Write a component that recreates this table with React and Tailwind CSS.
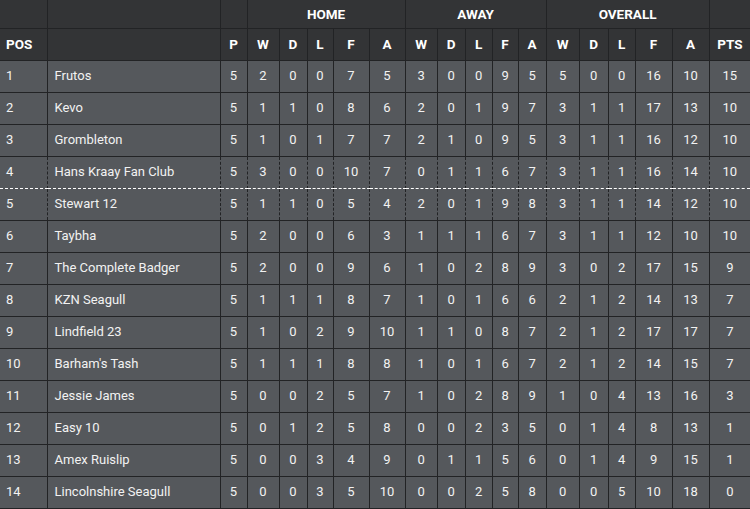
import React from "react";

const widths = [47, 173, 27, 32, 28, 26, 36, 36, 32, 28, 27, 26, 28, 33, 29, 27, 37, 37, 41];

const teams = [
  [1, "Frutos", 5, 2, 0, 0, 7, 5, 3, 0, 0, 9, 5, 5, 0, 0, 16, 10, 15],
  [2, "Kevo", 5, 1, 1, 0, 8, 6, 2, 0, 1, 9, 7, 3, 1, 1, 17, 13, 10],
  [3, "Grombleton", 5, 1, 0, 1, 7, 7, 2, 1, 0, 9, 5, 3, 1, 1, 16, 12, 10],
  [4, "Hans Kraay Fan Club", 5, 3, 0, 0, 10, 7, 0, 1, 1, 6, 7, 3, 1, 1, 16, 14, 10],
  [5, "Stewart 12", 5, 1, 1, 0, 5, 4, 2, 0, 1, 9, 8, 3, 1, 1, 14, 12, 10],
  [6, "Taybha", 5, 2, 0, 0, 6, 3, 1, 1, 1, 6, 7, 3, 1, 1, 12, 10, 10],
  [7, "The Complete Badger", 5, 2, 0, 0, 9, 6, 1, 0, 2, 8, 9, 3, 0, 2, 17, 15, 9],
  [8, "KZN Seagull", 5, 1, 1, 1, 8, 7, 1, 0, 1, 6, 6, 2, 1, 2, 14, 13, 7],
  [9, "Lindfield 23", 5, 1, 0, 2, 9, 10, 1, 1, 0, 8, 7, 2, 1, 2, 17, 17, 7],
  [10, "Barham's Tash", 5, 1, 1, 1, 8, 8, 1, 0, 1, 6, 7, 2, 1, 2, 14, 15, 7],
  [11, "Jessie James", 5, 0, 0, 2, 5, 7, 1, 0, 2, 8, 9, 1, 0, 4, 13, 16, 3],
  [12, "Easy 10", 5, 0, 1, 2, 5, 8, 0, 0, 2, 3, 5, 0, 1, 4, 8, 13, 1],
  [13, "Amex Ruislip", 5, 0, 0, 3, 4, 9, 0, 1, 1, 5, 6, 0, 1, 4, 9, 15, 1],
  [14, "Lincolnshire Seagull", 5, 0, 0, 3, 5, 10, 0, 0, 2, 5, 8, 0, 0, 5, 10, 18, 0],
];

const subHeads = ["P", "W", "D", "L", "F", "A", "W", "D", "L", "F", "A", "W", "D", "L", "F", "A", "PTS"];

const cell = "border border-[#222325] p-0";

export default function App() {
  return (
    <div className="w-[750px] h-[509px] overflow-hidden bg-[#55585c] font-['Roboto',sans-serif] text-[13px] text-[#f2f2f2]">
      <table className="table-fixed border-collapse w-[750px]">
        <colgroup>
          {widths.map((w, i) => (
            <col key={i} style={{ width: w }} />
          ))}
        </colgroup>
        <thead className="bg-[#333436] text-white font-bold text-[13.5px]">
          <tr className="h-[28px]">
            <th className={`${cell} border-l-0 border-t-0`}></th>
            <th className={`${cell} border-t-0`}></th>
            <th className={`${cell} border-t-0`}></th>
            <th colSpan={5} className={`${cell} border-t-0 text-center`}>HOME</th>
            <th colSpan={5} className={`${cell} border-t-0 text-center`}>AWAY</th>
            <th colSpan={5} className={`${cell} border-t-0 text-center`}>OVERALL</th>
            <th className={`${cell} border-t-0 border-r-0`}></th>
          </tr>
          <tr className="h-[32px]">
            <th className={`${cell} border-l-0 text-left pl-[6px]`}>POS</th>
            <th className={cell}></th>
            {subHeads.map((h, i) => (
              <th key={i} className={`${cell} text-center ${i === subHeads.length - 1 ? "border-r-0" : ""}`}>
                {h}
              </th>
            ))}
          </tr>
        </thead>
        <tbody>
          {teams.map((row) => (
            <tr key={row[0]} className="h-[32px]">
              {row.map((v, i) => (
                <td
                  key={i}
                  className={`${cell} ${i === 0 ? "border-l-0 pl-[6px] text-left" : i === 1 ? "pl-[7px] text-left" : "text-center"} ${i === row.length - 1 ? "border-r-0" : ""} ${row[0] === 5 ? "border-t-white border-dashed" : ""} ${row[0] === 4 ? "border-b-white border-dashed" : ""}`}
                >
                  {v}
                </td>
              ))}
            </tr>
          ))}
        </tbody>
      </table>
    </div>
  );
}
